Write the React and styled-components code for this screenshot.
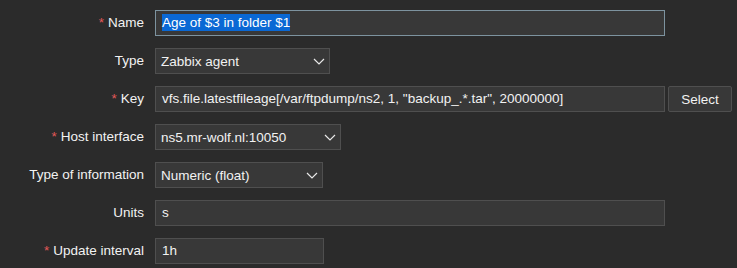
import React from "react";
import styled, { createGlobalStyle } from "styled-components";

const Global = createGlobalStyle`
  html, body {
    margin: 0;
    background: #2b2b2b;
  }
  body {
    font-family: "Liberation Sans", Arial, sans-serif;
    font-size: 13.5px;
    color: #f2f2f2;
  }
`;

const Form = styled.div`
  display: grid;
  grid-template-columns: 144px 1fr;
  column-gap: 11px;
  row-gap: 12px;
  padding-top: 10px;
  align-items: center;
`;

const Label = styled.label`
  text-align: right;
  white-space: nowrap;
  line-height: 26px;
`;

const Star = styled.span`
  color: #e45959;
  margin-right: 4px;
`;

const Field = styled.div`
  display: flex;
  gap: 3px;
  align-items: center;
`;

const Input = styled.div`
  box-sizing: border-box;
  width: ${(p) => p.$w}px;
  height: 26px;
  padding: 0 6px;
  background: #383838;
  border: 1px solid ${(p) => (p.$focused ? "#7d939f" : "#4f4f4f")};
  line-height: 24px;
  white-space: nowrap;
  overflow: hidden;
`;

const Selected = styled.span`
  background: #0a68d4;
  color: #ffffff;
  padding: 1px 0;
`;

const Select = styled.div`
  box-sizing: border-box;
  width: ${(p) => p.$w}px;
  height: 26px;
  padding: 0 4px 0 5px;
  background: #383838;
  border: 1px solid #4f4f4f;
  display: flex;
  align-items: center;
  justify-content: space-between;
  white-space: nowrap;
`;

const Button = styled.div`
  box-sizing: border-box;
  width: 64px;
  height: 26px;
  background: #383838;
  border: 1px solid #4f4f4f;
  border-radius: 2px;
  display: flex;
  align-items: center;
  justify-content: center;
`;

const Chevron = () => (
  <svg width="12" height="7" viewBox="0 0 12 7">
    <polyline points="1,1 6,6 11,1" fill="none" stroke="#e8e8e8" strokeWidth="1.2" />
  </svg>
);

const Row = ({ required, label, children }) => (
  <>
    <Label>
      {required && <Star>*</Star>}
      {label}
    </Label>
    <Field>{children}</Field>
  </>
);

export default function App() {
  return (
    <>
      <Global />
      <Form>
        <Row required label="Name">
          <Input $w={510} $focused>
            <Selected>Age of $3 in folder $1</Selected>
          </Input>
        </Row>
        <Row label="Type">
          <Select $w={175}>
            Zabbix agent
            <Chevron />
          </Select>
        </Row>
        <Row required label="Key">
          <Input $w={510}>
            vfs.file.latestfileage[/var/ftpdump/ns2, 1, "backup_.*.tar", 20000000]
          </Input>
          <Button>Select</Button>
        </Row>
        <Row required label="Host interface">
          <Select $w={186}>
            ns5.mr-wolf.nl:10050
            <Chevron />
          </Select>
        </Row>
        <Row label="Type of information">
          <Select $w={168}>
            Numeric (float)
            <Chevron />
          </Select>
        </Row>
        <Row label="Units">
          <Input $w={510}>s</Input>
        </Row>
        <Row required label="Update interval">
          <Input $w={169}>1h</Input>
        </Row>
      </Form>
    </>
  );
}
